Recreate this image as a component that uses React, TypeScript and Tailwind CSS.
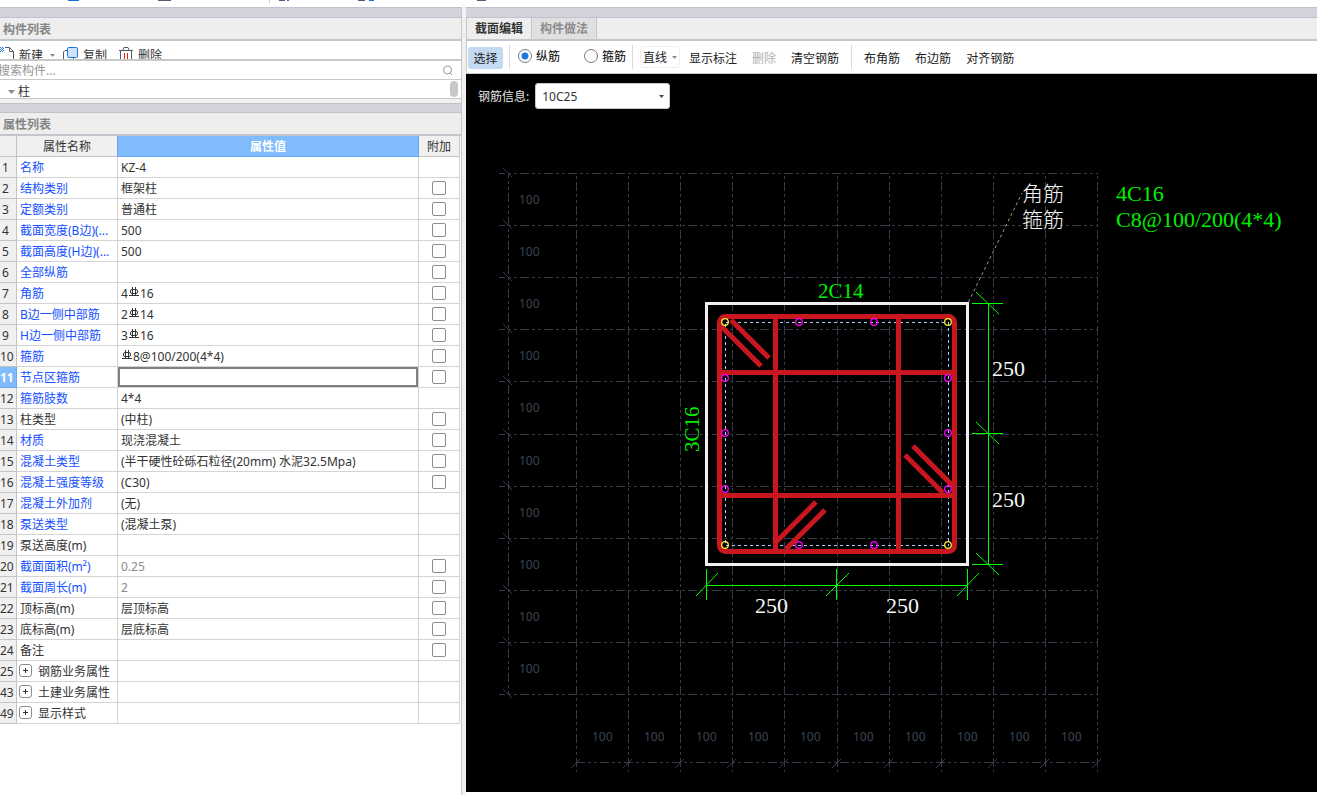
import { useState, type ReactNode } from "react";
import clsx from "clsx";

type Row = {
  no: number;
  name: string;
  value?: string;
  plain?: boolean;
  check?: boolean;
  muted?: boolean;
  group?: boolean;
};

// "#" in a value stands for the rebar grade symbol
const rows: Row[] = [
  { no: 1, name: "名称", value: "KZ-4" },
  { no: 2, name: "结构类别", value: "框架柱", check: true },
  { no: 3, name: "定额类别", value: "普通柱", check: true },
  { no: 4, name: "截面宽度(B边)(...", value: "500", check: true },
  { no: 5, name: "截面高度(H边)(...", value: "500", check: true },
  { no: 6, name: "全部纵筋", check: true },
  { no: 7, name: "角筋", value: "4#16", check: true },
  { no: 8, name: "B边一侧中部筋", value: "2#14", check: true },
  { no: 9, name: "H边一侧中部筋", value: "3#16", check: true },
  { no: 10, name: "箍筋", value: "#8@100/200(4*4)", check: true },
  { no: 11, name: "节点区箍筋", check: true },
  { no: 12, name: "箍筋肢数", value: "4*4" },
  { no: 13, name: "柱类型", value: "(中柱)", plain: true, check: true },
  { no: 14, name: "材质", value: "现浇混凝土", check: true },
  { no: 15, name: "混凝土类型", value: "(半干硬性砼砾石粒径(20mm) 水泥32.5Mpa)", check: true },
  { no: 16, name: "混凝土强度等级", value: "(C30)", check: true },
  { no: 17, name: "混凝土外加剂", value: "(无)" },
  { no: 18, name: "泵送类型", value: "(混凝土泵)" },
  { no: 19, name: "泵送高度(m)", plain: true },
  { no: 20, name: "截面面积(m²)", value: "0.25", muted: true, check: true },
  { no: 21, name: "截面周长(m)", value: "2", muted: true, check: true },
  { no: 22, name: "顶标高(m)", value: "层顶标高", plain: true, check: true },
  { no: 23, name: "底标高(m)", value: "层底标高", plain: true, check: true },
  { no: 24, name: "备注", plain: true, check: true },
  { no: 25, name: "钢筋业务属性", plain: true, group: true },
  { no: 43, name: "土建业务属性", plain: true, group: true },
  { no: 49, name: "显示样式", plain: true, group: true },
];

const SELECTED = 11;

function RebarSymbol() {
  return (
    <svg className="inline-block align-[1px]" width="12" height="10" viewBox="0 0 12 10" fill="none" stroke="#333">
      <rect x="2.500" y="2.500" width="7" height="4" rx="1.500" />
      <path d="M4.500 0v9M7.500 0v9M1 8.500h10" />
    </svg>
  );
}

function Value({ text }: { text: string }) {
  const parts = text.split("#");
  if (parts.length === 1) return <>{text}</>;
  return (
    <>
      {parts[0]}
      <RebarSymbol />
      {parts[1]}
    </>
  );
}

function Caret({ className }: { className?: string }) {
  return (
    <svg className={className} width="5" height="3" viewBox="0 0 5 3" fill="currentColor">
      <path d="M0 0h5L2.5 3z" />
    </svg>
  );
}

function PanelBar({ slim = false }: { slim?: boolean }) {
  return <div className={clsx("border-y border-[#c0c3cb] bg-[#d3d4db]", slim ? "h-[10px]" : "h-[11px]")} />;
}

function PanelTitle({ children }: { children: ReactNode }) {
  return (
    <h2 className="h-[23px] border-b-2 border-[#c3c6cc] bg-[#eeeeee] pl-[3px] font-bold leading-[24px] text-[#858585]">{children}</h2>
  );
}

function Separator() {
  return <div className="mt-1 h-6 w-px shrink-0 bg-[#dcdcdc]" />;
}

function PropertyTable() {
  return (
    <table className="w-full table-fixed border-separate border-spacing-0 text-[#333]">
      <colgroup>
        <col className="w-[17px]" />
        <col className="w-[101px]" />
        <col />
        <col className="w-[41px]" />
      </colgroup>
      <thead>
        <tr className="h-[21px] leading-[18px]">
          <th className="border-b border-r border-[#c4c4c4] bg-[#f0f0f0] p-0" />
          <th className="border-b border-r border-b-[#c4c4c4] border-r-[#66a8ee] bg-[#f0f0f0] px-0 pb-0 pt-[2px] font-normal">属性名称</th>
          <th className="border-b border-r border-[#66a8ee] bg-[#80bbfb] px-0 pb-0 pt-[2px] font-bold text-white">属性值</th>
          <th className="border-b border-r border-[#c4c4c4] bg-[#f0f0f0] px-0 pb-0 pt-[2px] font-normal">附加</th>
        </tr>
      </thead>
      <tbody>
        {rows.map((row) => {
          const selected = row.no === SELECTED;
          return (
            <tr key={row.no} className="h-[21px] leading-[18px]">
              <td
                className={clsx(
                  "border-b border-r pb-0 pl-0 pr-[5px] pt-[2px] text-center",
                  selected ? "border-[#66a8ee] bg-[#80bbfb] font-bold text-white" : "border-[#c4c4c4] bg-[#f0f0f0]",
                )}
              >
                {row.no}
              </td>
              <td
                className={clsx(
                  "whitespace-nowrap border-b border-r border-[#d4d4d4] pb-0 pr-0 pt-[2px]",
                  row.group ? "pl-[2px]" : "pl-[3px]",
                  !row.plain && "text-[#1450ff]",
                )}
              >
                {row.group ? (
                  <div className="flex h-[18px] items-start gap-[6px]">
                    <button aria-label={`展开${row.name}`} className="mt-px flex size-[13px] items-center justify-center rounded-[3px] border border-[#8c8c8c] bg-white">
                      <svg width="5" height="5" viewBox="0 0 5 5" stroke="#333" shapeRendering="crispEdges">
                        <path d="M0 2.5h5M2.5 0v5" />
                      </svg>
                    </button>
                    {row.name}
                  </div>
                ) : (
                  row.name
                )}
              </td>
              <td className={clsx("border-b border-r border-[#d4d4d4] p-0", row.muted && "text-[#8a8a8a]")}>
                {selected ? (
                  <input aria-label={row.name} className="block h-5 w-full border-2 border-[#808080] px-px outline-none" />
                ) : (
                  <div className="h-5 overflow-hidden whitespace-nowrap pl-[3px] pt-[2px]">
                    <Value text={row.value ?? ""} />
                  </div>
                )}
              </td>
              <td className="border-b border-r border-[#d4d4d4] p-0">
                {row.check && (
                  <input
                    type="checkbox"
                    aria-label={`附加 ${row.name}`}
                    className="mx-auto block size-[14px] appearance-none rounded-[2px] border border-[#8c8c8c] bg-white checked:bg-[#80bbfb]"
                  />
                )}
              </td>
            </tr>
          );
        })}
      </tbody>
    </table>
  );
}

function ComponentList() {
  return (
    <section>
      <PanelBar />
      <PanelTitle>构件列表</PanelTitle>
      <div className="flex h-5 items-start overflow-hidden border-b-2 border-[#c8c8c8] pt-[6px] text-[#333]">
        <button className="flex shrink-0 items-start gap-[5px]">
          <svg width="14" height="16" viewBox="0 0 14 16" fill="none" stroke="#555b66">
            <path d="M5 .5h4.500L13.500 4.500V15M9.500 .5v4h4" />
            <path
              d="M0 0h1v1H0zM2 0h1v1H2zM1 1h1v1H1zM3 1h1v1H3zM0 2h1v1H0zM2 2h1v1H2zM1 3h1v1H1zM3 3h1v1H3zM0 4h1v1H0zM2 4h1v1H2z"
              fill="#1f78e0"
              stroke="none"
            />
          </svg>
          <span className="leading-[18px]">新建</span>
        </button>
        <Caret className="ml-[7px] mt-[7px] text-[#8a8a8a]" />
        <button className="ml-2 flex shrink-0 items-start gap-[5px]">
          <svg width="15" height="16" viewBox="0 0 15 16" fill="none">
            <path d="M4 3.500H2L.5 5V13l1 1h9v-3" stroke="#555b66" />
            <rect x="4.500" y=".5" width="10" height="10" rx="1" fill="#cfe2fb" stroke="#1f78e0" />
          </svg>
          <span className="leading-[18px]">复制</span>
        </button>
        <button className="ml-3 flex shrink-0 items-start gap-[5px]">
          <svg width="14" height="16" viewBox="0 0 14 16" fill="none" stroke="#555b66">
            <path d="M0 3.500h14M3.500 3.500L5 .5h4l1.500 3M1.500 3.500V14.500h11V3.500" />
            <path d="M5.500 6v6M8.500 6v6" stroke="#e02020" />
          </svg>
          <span className="leading-[18px]">删除</span>
        </button>
      </div>
      <label className="flex h-[19px] items-center border-b border-[#c8c8c8] pr-[7px]">
        <input
          aria-label="搜索构件"
          placeholder="搜索构件..."
          className="-ml-[2px] h-[18px] min-w-0 flex-1 pt-[2px] text-[#333] outline-none placeholder:text-[#959595]"
        />
        <svg width="12" height="12" viewBox="0 0 12 12" fill="none" stroke="#999">
          <circle cx="5.500" cy="6" r="4" />
          <path d="M8 9l2 2" />
        </svg>
      </label>
      <div className="flex h-[19px] items-end border-b border-[#c8c8c8] pl-2 pr-[3px] text-[#333]">
        <svg className="mb-1" width="7" height="4" viewBox="0 0 7 4" fill="#8a8a8a">
          <path d="M0 0h7L3.500 4z" />
        </svg>
        <span className="ml-[3px] h-[14px] flex-1 leading-[16px]">柱</span>
        <div className="mb-px h-4 w-2 rounded-full bg-[#c8c8c8]" />
      </div>
    </section>
  );
}

const toolButton = "h-[22px] shrink-0 whitespace-nowrap";

function Toolbar() {
  const [kind, setKind] = useState("纵筋");
  return (
    <div className="flex h-[33px] items-start border-b border-l border-[#c8c8c8] bg-white pl-px text-[#222]">
      <button className="mt-[6px] h-[22px] w-[35px] shrink-0 rounded-[3px] bg-[#c4daf2] pt-[2px]">选择</button>
      <div className="ml-[6px] flex">
        <Separator />
      </div>
      <div className="ml-2 mt-1 flex gap-6">
        {["纵筋", "箍筋"].map((k) => (
          <label key={k} className="flex h-[22px] items-center gap-1 text-black">
            <input
              type="radio"
              name="rebar-kind"
              checked={kind === k}
              onChange={() => setKind(k)}
              className="size-[14px] appearance-none rounded-full border border-[#7a7a7a] bg-white checked:bg-[radial-gradient(circle,#1f78e0_3px,transparent_4px)]"
            />
            <span className="pt-px">{k}</span>
          </label>
        ))}
      </div>
      <div className="ml-[6px] flex">
        <Separator />
      </div>
      <button className="ml-[7px] mt-[5px] flex h-[22px] shrink-0 items-center gap-[5px] rounded-[3px] border border-[#f0f0f0] px-[2px]">
        <span className="pt-[2px]">直线</span>
        <Caret className="text-[#8a8a8a]" />
      </button>
      <div className="ml-[9px] mt-[7px] flex gap-[15px]">
        <button className={toolButton}>显示标注</button>
        <button className={clsx(toolButton, "text-[#b0b0b0]")} disabled>删除</button>
        <button className={toolButton}>清空钢筋</button>
      </div>
      <div className="ml-3 flex">
        <Separator />
      </div>
      <div className="ml-3 mt-[7px] flex gap-[15px]">
        <button className={toolButton}>布角筋</button>
        <button className={toolButton}>布边筋</button>
        <button className={toolButton}>对齐钢筋</button>
      </div>
    </div>
  );
}

const steps = Array.from({ length: 11 }, (_, i) => Math.round(i * 52.1));
const labels = steps.slice(0, 10);

function Grid() {
  return (
    <g stroke="#323b47" fill="none">
      <g strokeDasharray="9 3 3 3 3 3" shapeRendering="crispEdges">
        {steps.map((s) => (
          <path key={`h${s}`} d={`M499 ${173.5 + s}H1098`} strokeDashoffset="3" />
        ))}
        {steps.map((s) => (
          <path key={`v${s}`} d={`M${576.5 + s} 173V772`} strokeDashoffset="15" />
        ))}
        <path d="M508.500 173V695" strokeDashoffset="4" />
        <path d="M576 762.500H1098" />
      </g>
      {steps.map((s) => (
        <path key={`t${s}`} d={`M503 ${168 + s}l9 9M${571 + s} 768l9 -9`} />
      ))}
      <g fill="#3b4553" stroke="none" className="font-['Noto_Sans'] text-[12px]">
        {labels.map((s) => (
          <text key={`l${s}`} x="519" y={204 + s}>100</text>
        ))}
        {labels.map((s) => (
          <text key={`b${s}`} x={592 + s} y="741">100</text>
        ))}
      </g>
    </g>
  );
}

const corners = [[725, 322], [948, 322], [725, 545], [948, 545]];
const sides = [
  [799, 322], [874, 322], [799, 545], [874, 545],
  [725, 378], [725, 433], [725, 489],
  [948, 378], [948, 433], [948, 489],
];

function SectionDrawing() {
  return (
    <svg className="block" width="851" height="679" viewBox="466 113 851 679">
      <Grid />
      <path d="M968.500 302L1022 193" stroke="#999" strokeDasharray="3 3" />
      <rect x="725.500" y="322.500" width="223" height="223" fill="none" stroke="#a9cdf5" strokeDasharray="3 3" shapeRendering="crispEdges" />
      <rect x="706.500" y="303.500" width="261" height="261" fill="none" stroke="#f0f0f0" strokeWidth="3" />

      <g fill="none" stroke="#c8171e" strokeWidth="5">
        <rect x="719.500" y="316.500" width="235" height="235" rx="6" />
        <path d="M775.500 315v236M898.500 315v236M719 372.500h235M719 495.500h235" />
        <path d="M721 326l40 40M731 320l38 38M913 446l40 40M905 455l38 38M816 502l-41 41M825 510l-39 39" />
      </g>

      <g fill="none" strokeWidth="1.300">
        {corners.map(([x, y]) => (
          <circle key={`${x}-${y}`} cx={x} cy={y} r="3.300" stroke="#ffee3c" />
        ))}
        {sides.map(([x, y]) => (
          <circle key={`${x}-${y}`} cx={x} cy={y} r="3.300" stroke="#ff00ff" />
        ))}
      </g>

      <g stroke="#00ff00">
        <path d="M988.500 303v262M972 303.500h31M972 433.500h31M972 564.500h31" shapeRendering="crispEdges" />
        <path d="M706 585.500h262M706.500 569v31M836.500 569v31M967.500 569v31" shapeRendering="crispEdges" />
        <path d="M976 292l23 22M976 422l23 22M976 553l23 22M696 596l22 -23M826 596l23 -23M957 596l22 -23" />
      </g>

      <g className="font-['Liberation_Serif','Noto_Sans_CJK_SC',serif] text-[22px]" fill="#00f000">
        <text x="818" y="298" className="text-[21px]">2C14</text>
        <text transform="translate(699 452) rotate(-90)" className="text-[21px]">3C16</text>
        <text x="1116" y="201">4C16</text>
        <text x="1116" y="227">C8@100/200(4*4)</text>
        <g fill="#f5f5f5">
          <text x="992" y="376">250</text>
          <text x="992" y="507">250</text>
          <text x="755" y="613">250</text>
          <text x="886" y="613">250</text>
        </g>
      </g>
      <text className="font-['Noto_Sans_CJK_SC',sans-serif] text-[21px] font-light" fill="#f5f5f5">
        <tspan x="1022" y="201">角筋</tspan>
        <tspan x="1022" y="227">箍筋</tspan>
      </text>
    </svg>
  );
}

export default function App() {
  return (
    <div className="flex min-h-screen flex-col bg-white font-['Noto_Sans','Noto_Sans_CJK_SC',sans-serif] text-[12px]">
      <header className="h-[7px] overflow-hidden">
        <svg width="500" height="7" viewBox="0 0 500 7" fill="#555b70">
          <path d="M68 0h11v1h-11zM369 0h5v1h-5zM287 0h2v1h-2z" fill="#1a6fe0" />
          <path d="M158 0h13v1h-13zM279 0h6v1h-6zM358 0h7v1h-7zM477 0h9v1h-9z" />
          <path d="M269 0h1v3h-1z" fill="#ccc" />
        </svg>
      </header>
      <div className="flex flex-1 bg-[#f0f0f0]">
        <aside className="w-[462px] shrink-0 border-r border-[#c8c8c8] bg-white">
          <ComponentList />
          <div className="h-1 bg-[#f0f0f0]" />
          <section>
            <PanelBar slim />
            <PanelTitle>属性列表</PanelTitle>
            <div className="pr-px">
              <PropertyTable />
            </div>
          </section>
        </aside>
        <main className="ml-1 min-w-0 flex-1 bg-white">
          <PanelBar />
          <nav className="flex h-[23px] border-b-2 border-l border-[#c3c6cc] bg-[#eeeeee]">
            <button className="w-[65px] shrink-0 border-r border-[#c8c8c8] pt-px font-bold text-[#333]">截面编辑</button>
            <button className="w-[65px] shrink-0 border-r border-[#c8c8c8] bg-[#e0e0e0] pt-px font-bold text-[#8c8c8c]">构件做法</button>
          </nav>
          <Toolbar />
          <div className="overflow-hidden bg-black">
            <div className="flex h-[39px] items-center pl-3 pt-[5px] text-[#e6e6e6]">
              <label htmlFor="rebar-info" className="pt-[2px]">钢筋信息:</label>
              <div className="relative ml-[6px]">
                <select id="rebar-info" className="block h-[26px] w-[135px] appearance-none rounded-[3px] border border-[#c8c8c8] bg-white pl-[6px] pt-[2px] text-[#333]">
                  <option>10C25</option>
                </select>
                <Caret className="pointer-events-none absolute right-[6px] top-3 text-[#444]" />
              </div>
            </div>
            <SectionDrawing />
          </div>
        </main>
      </div>
    </div>
  );
}
